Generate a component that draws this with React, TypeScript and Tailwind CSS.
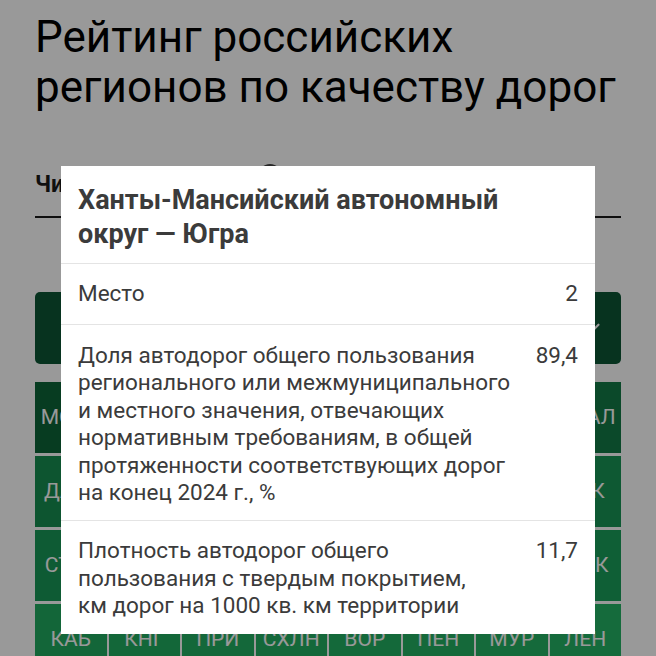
import { ChevronDown } from "lucide-react"

const ROWS = [
  { codes: ["МОСК", "ХМАО", "ЯНАО", "ТАТ", "БЕЛ", "ТЮМ", "СПБ", "ЯМАЛ"], colors: ["#0d6438", "#0f6b3c", "#10703f", "#117240", "#117442", "#127644", "#127845", "#137b47"] },
  { codes: ["ДАГЕ", "ЧЕЧ", "ИНГ", "КБР", "ЛИП", "ОРЕ", "КУР", "ТУК"], colors: ["#168e51", "#168f52", "#179053", "#179153", "#179254", "#179355", "#189455", "#189556"] },
  { codes: ["СТАВ", "КРА", "РОС", "НИЖ", "ЧУВ", "БАШ", "КОС", "ОМК"], colors: ["#189857", "#199958", "#199a59", "#199b59", "#1a9c5a", "#1a9d5a", "#1a9e5b", "#1a9f5b"] },
  { codes: ["КАБ", "КНГ", "ПРИ", "СХЛН", "ВОР", "ПЕН", "МУР", "ЛЕН"], colors: ["#21ab60", "#21ac60", "#22ad61", "#22ae61", "#22af62", "#23b062", "#23b163", "#24b264"] },
]

export default function App() {
  return (
    <div className="relative h-[656px] w-[656px] overflow-hidden bg-white font-['Roboto','Liberation_Sans',sans-serif]">
      {/* page behind the dialog */}
      <div className="px-[35px] pt-[12px]">
        <h1 className="text-[44px] leading-[50px] text-black">
          Рейтинг российских
          <br />
          регионов по качеству дорог
        </h1>

        <div className="mt-[59px] flex items-center border-b-2 border-[#1a1a1a] pb-[17px]">
          <span className="w-[223px] text-[23px] font-bold leading-[28px] text-[#1a1a1a]">Читать методику</span>
          <span className="-mt-[18px] h-[24px] w-[24px] rounded-full bg-[#444]" />
        </div>

        <div className="mt-[74px] flex h-[72px] items-center justify-end rounded-[5px] bg-[#0c5534] px-4 text-white">
          <ChevronDown size={26} strokeWidth={2} />
        </div>

        <div className="mt-[18px] grid grid-cols-8 gap-x-[2px] gap-y-[3px]">
          {ROWS.map((row, r) =>
            row.codes.map((code, i) => (
              <div
                key={`${r}-${i}`}
                className="flex h-[71px] items-center justify-center text-[21px] text-white"
                style={{ backgroundColor: row.colors[i] }}
              >
                {code}
              </div>
            ))
          )}
        </div>
      </div>

      {/* scrim */}
      <div className="absolute inset-0 bg-black/40" />

      {/* dialog */}
      <div className="absolute left-[61px] top-[166px] w-[534px] bg-white text-[#3b3b3b]">
        <div className="px-[17px] pb-[12px] pt-[17px] text-[27px] font-bold leading-[34px]">
          Ханты-Мансийский автономный
          <br />
          округ — Югра
        </div>

        <div className="flex justify-between border-t border-[#e4e4e4] px-[17px] pb-[16px] pt-[16px] text-[22.5px] leading-[27.5px]">
          <span>Место</span>
          <span>2</span>
        </div>

        <div className="flex justify-between border-t border-[#e4e4e4] px-[17px] pb-[13px] pt-[17px] text-[22.5px] leading-[27.6px]">
          <span>
            Доля автодорог общего пользования
            <br />
            регионального или межмуниципального
            <br />
            и местного значения, отвечающих
            <br />
            нормативным требованиям, в общей
            <br />
            протяженности соответствующих дорог
            <br />
            на конец 2024 г., %
          </span>
          <span>89,4</span>
        </div>

        <div className="flex justify-between border-t border-[#e4e4e4] px-[17px] pb-[14px] pt-[16px] text-[22.5px] leading-[27.5px]">
          <span>
            Плотность автодорог общего
            <br />
            пользования с твердым покрытием,
            <br />
            км дорог на 1000 кв. км территории
          </span>
          <span>11,7</span>
        </div>
      </div>
    </div>
  )
}
